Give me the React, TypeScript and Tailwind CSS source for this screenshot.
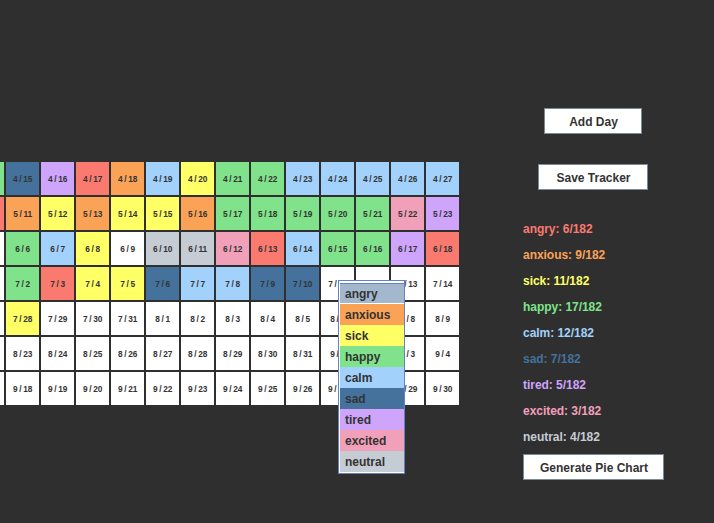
const fills = {
  angry: 'bg-[#fb7a70]',
  anxious: 'bg-[#faa357]',
  sick: 'bg-[#ffff66]',
  happy: 'bg-[#80e38b]',
  calm: 'bg-[#a2d1fb]',
  sad: 'bg-[#44729c]',
  tired: 'bg-[#cfa4fb]',
  excited: 'bg-[#f1a0ba]',
  neutral: 'bg-[#c6ccd4]',
  none: 'bg-white',
};

type Mood = keyof typeof fills;

const rows: { month: number; first: number; moods: string }[] = [
  { month: 4, first: 14, moods: 'hdtaxckhhccccc' },
  { month: 5, first: 10, moods: 'axkxkkxhhhhhet' },
  { month: 6, first: 5, moods: '.hck.nneachhta' },
  { month: 7, first: 1, moods: '.hakkdccdd....' },
  { month: 7, first: 27, moods: '.k............' },
  { month: 8, first: 22, moods: '..............' },
  { month: 9, first: 17, moods: '..............' },
];

const codes: Record<string, Mood> = {
  a: 'angry',
  x: 'anxious',
  k: 'sick',
  h: 'happy',
  c: 'calm',
  d: 'sad',
  t: 'tired',
  e: 'excited',
  n: 'neutral',
  '.': 'none',
};

const monthLength: Record<number, number> = { 4: 30, 5: 31, 6: 30, 7: 31, 8: 31, 9: 30 };

function dateLabel(month: number, day: number) {
  const length = monthLength[month];
  return day > length ? `${month + 1} / ${day - length}` : `${month} / ${day}`;
}

const counts = [
  { mood: 'angry', count: 6, color: 'text-[#fb7a70]' },
  { mood: 'anxious', count: 9, color: 'text-[#faa357]' },
  { mood: 'sick', count: 11, color: 'text-[#ffff66]' },
  { mood: 'happy', count: 17, color: 'text-[#80e38b]' },
  { mood: 'calm', count: 12, color: 'text-[#a2d1fb]' },
  { mood: 'sad', count: 7, color: 'text-[#44729c]' },
  { mood: 'tired', count: 5, color: 'text-[#cfa4fb]' },
  { mood: 'excited', count: 3, color: 'text-[#f1a0ba]' },
  { mood: 'neutral', count: 4, color: 'text-[#c6ccd4]' },
];

const menuMoods: Mood[] = ['anxious', 'sick', 'happy', 'calm', 'sad', 'tired', 'excited', 'neutral'];

function Button({ label, size }: { label: string; size: string }) {
  return (
    <button className={`flex h-[26px] items-center justify-center border border-[#7a8a99] bg-white pl-px pt-px font-bold text-[#333333] ${size}`}>
      {label}
    </button>
  );
}

function MoodMenu() {
  return (
    <div className="absolute left-[338px] top-[280px] flex h-[194px] w-[67px] flex-col border border-[#6382bf] bg-white pl-px pt-[2px] font-bold text-[#333333]">
      <div className="mb-px flex h-5 items-center border-t border-[#6382bf] bg-[#a3b8cc] pl-[5px]">angry</div>
      {menuMoods.map((mood) => (
        <div key={mood} className={`flex h-[21px] items-center pl-[5px] ${fills[mood]}`}>
          {mood}
        </div>
      ))}
    </div>
  );
}

export default function App() {
  return (
    <div className="relative flex h-[523px] w-[714px] overflow-hidden bg-[#2f2f2f] font-['Liberation_Sans',Arial,sans-serif] text-[12px]">
      <main className="-ml-[29px] mt-[162px] flex w-[488px] shrink-0 flex-col gap-[2px]">
        {rows.map((row) => (
          <div key={`${row.month}-${row.first}`} className="flex gap-[2px]">
            {row.moods.split('').map((code, i) => (
              <div
                key={i}
                className={`flex size-[33px] shrink-0 items-center justify-center whitespace-nowrap pt-px text-[8.3px] font-bold tracking-[-0.3px] text-[#333333] ${fills[codes[code]]}`}
              >
                {dateLabel(row.month, row.first + i)}
              </div>
            ))}
          </div>
        ))}
      </main>
      <aside className="ml-[64px] flex w-[141px] flex-col pt-[108px]">
        <div className="ml-[-1px] flex flex-col items-center gap-[30px]">
          <Button label="Add Day" size="w-[98px]" />
          <Button label="Save Tracker" size="w-[110px]" />
        </div>
        <ul className="mt-[26px] flex flex-col font-bold">
          {counts.map(({ mood, count, color }) => (
            <li key={mood} className={`flex h-[26px] items-center tracking-[-0.04px] ${color}`}>
              {mood}: {count}/182
            </li>
          ))}
        </ul>
        <div className="mt-[4px]">
          <Button label="Generate Pie Chart" size="w-[141px]" />
        </div>
      </aside>
      <MoodMenu />
    </div>
  );
}
